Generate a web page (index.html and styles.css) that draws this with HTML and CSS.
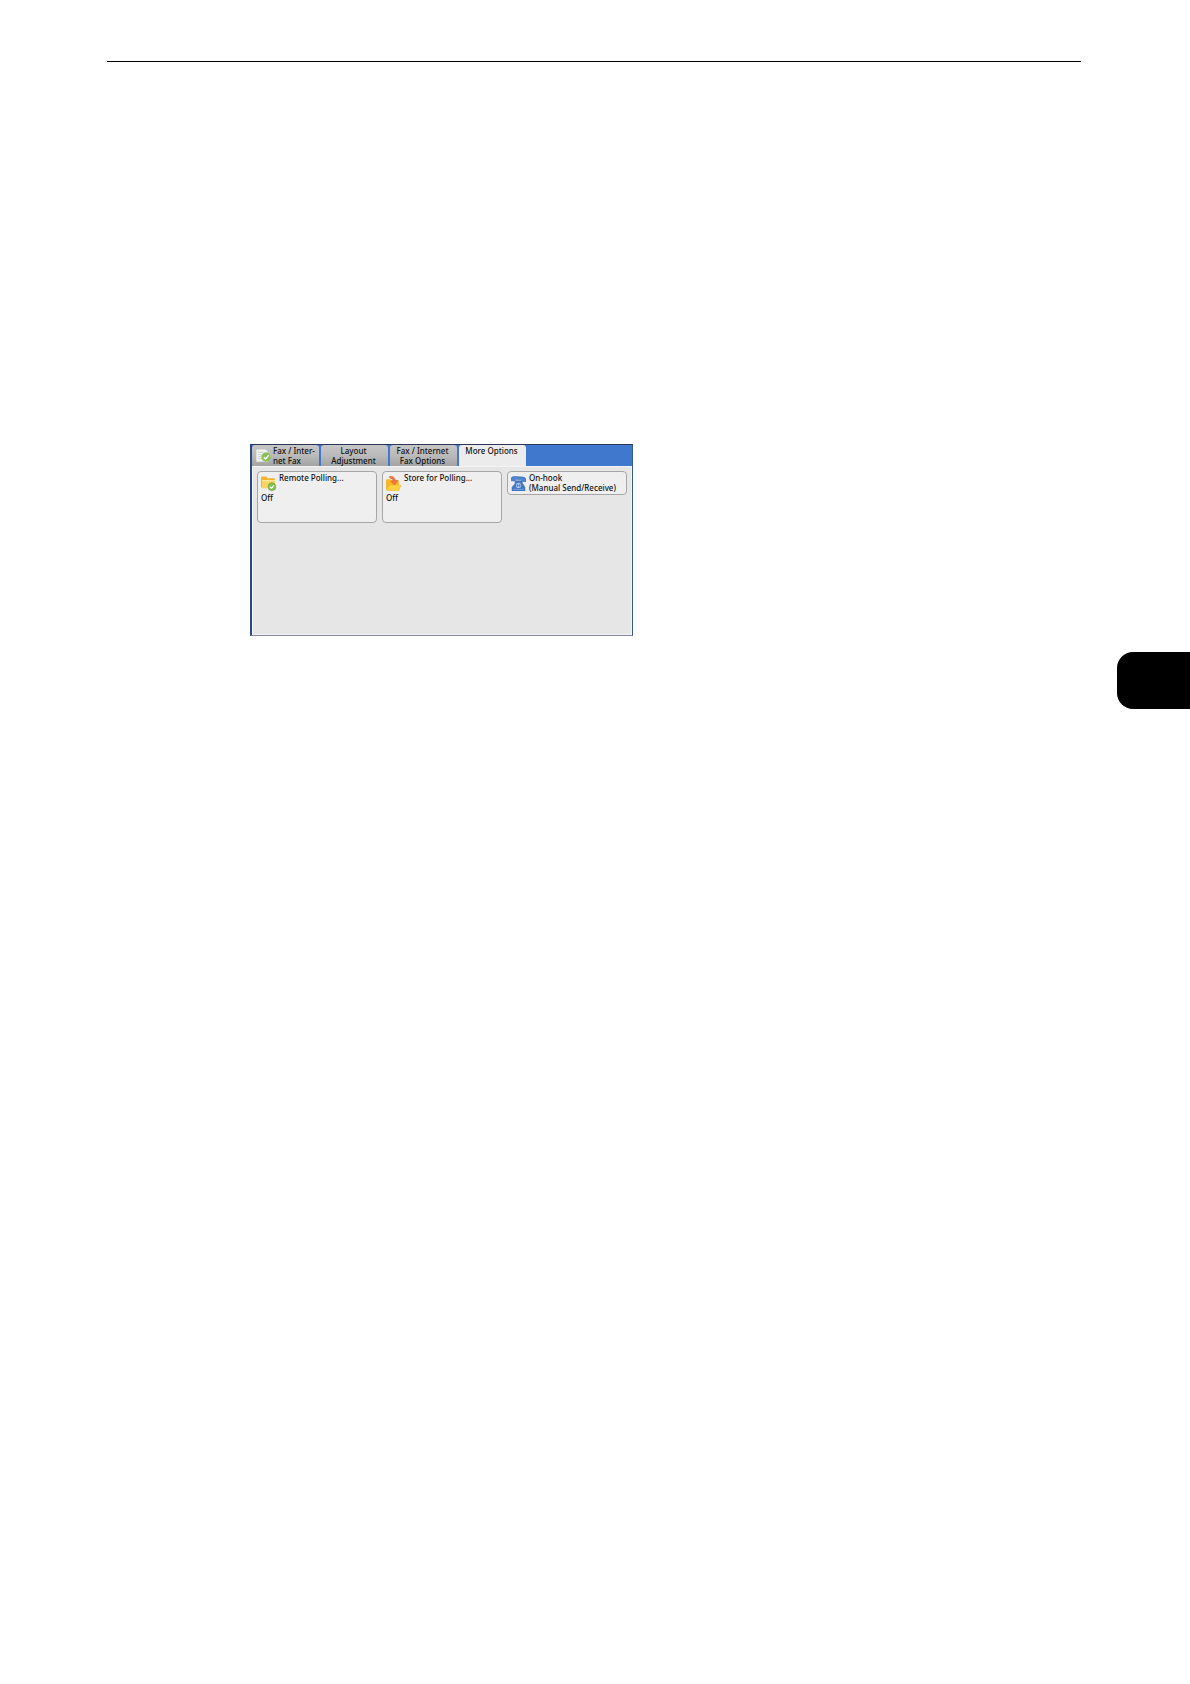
FILE: index.html
```html
<!DOCTYPE html>
<html lang="en">
<head>
<meta charset="utf-8">
<title>Fax / Internet Fax - More Options</title>
<link rel="stylesheet" href="styles.css">
</head>
<body>
<hr class="page-rule">
<main class="content">
  <section class="screen">
    <div class="tabs" role="tablist">
      <button class="tab tab-with-icon" role="tab" aria-selected="false">
        <svg class="icon" viewBox="0 0 14 14" aria-hidden="true">
          <path d="M0 1h9l2 2v10H0z" fill="#f1f3ef" stroke="#b4bab4" stroke-width=".6"/>
          <path d="M2 4h5M2 6h3M2 8h3M2 10h4" stroke="#b9c8bd" stroke-width=".7"/>
          <circle cx="9.500" cy="8.500" r="4.400" fill="#86bd55" stroke="#b5d49c" stroke-width=".6"/>
          <path d="M7.300 8.600l1.600 1.700 3-3.500" fill="none" stroke="#fff" stroke-width="1.300"/>
        </svg>
        <span>Fax / Inter-<br>net Fax</span>
      </button>
      <button class="tab" role="tab" aria-selected="false">Layout<br>Adjustment</button>
      <button class="tab" role="tab" aria-selected="false">Fax / Internet<br>Fax Options</button>
      <button class="tab tab-active" role="tab" aria-selected="true">More Options</button>
    </div>
    <div class="panel" role="tabpanel">
      <button class="card card-tall">
        <span class="card-head">
          <svg class="icon" viewBox="0 0 14 14" aria-hidden="true">
            <path d="M0 1.500q0-1 1-1h4l1 1.500h6q1 0 1 1v8H1q-1 0-1-1z" fill="#f3b32e"/>
            <path d="M1 4h12v7.500H1z" fill="#ffd566"/>
            <path d="M1 4.200h12" stroke="#ffedb0" stroke-width=".8"/>
            <circle cx="10.200" cy="10" r="3.600" fill="#84c24a" stroke="#62a336" stroke-width=".6"/>
            <path d="M8.200 10l1.600 1.600 2.500-3" fill="none" stroke="#fff" stroke-width="1.100"/>
          </svg>
          <span>Remote Polling...</span>
        </span>
        <span class="card-value">Off</span>
      </button>
      <button class="card card-tall">
        <span class="card-head">
          <svg class="icon" viewBox="0 0 14 14" aria-hidden="true">
            <path d="M0 4q0-1 1-1h3l1 1h6q1 0 1 1v8H1q-1 0-1-1z" fill="#f7b82a"/>
            <path d="M3 8.500h11l-2 4.700q-.2.500-1 .5H.8z" fill="#ffd03f" stroke="#f2ae24" stroke-width=".4"/>
            <path d="M3.500.3q4.500-.3 5.200 4h2.300L7.700 8.300 4.500 4.700h2.200Q6.200 2 3.500 1.800z" fill="#ef7a42" stroke="#d65724" stroke-width=".5"/>
          </svg>
          <span>Store for Polling...</span>
        </span>
        <span class="card-value">Off</span>
      </button>
      <button class="card">
        <span class="card-head">
          <svg class="icon" viewBox="0 0 14 14" aria-hidden="true">
            <path d="M4 4.500h6l.8 2.500 2.200 3.500V14H1v-3.500L3.800 7z" fill="#4479c6" stroke="#2f62ae" stroke-width=".5"/>
            <path d="M0 3Q0 .6 3 .4l8 .6q3 .4 3 2.700v1.600l-3.800-.3-.3-1.500-5.800-.4-.3 1.600L.2 4.500z" fill="#4f86d2" stroke="#2f62ae" stroke-width=".5"/>
            <circle cx="7" cy="8.800" r="2.400" fill="#a9c7ef"/>
            <path d="M6 7.300v3M8 7.300v3M5 8.800h4" stroke="#4479c6" stroke-width=".6"/>
            <path d="M2 12.500h10" stroke="#8fb4e6" stroke-width=".6"/>
          </svg>
          <span>On-hook<br>(Manual Send/Receive)</span>
        </span>
      </button>
    </div>
  </section>
</main>
<aside class="chapter-tab"></aside>
</body>
</html>
```
FILE: styles.css
```css
* {
  box-sizing: border-box;
}

body {
  margin: 0;
  background: #fff;
  color: #111;
  font-family: "Noto Sans", "Open Sans", sans-serif;
  font-size: 8px;
  line-height: 10px;
}

.page-rule {
  height: 1px;
  margin: 61px 109px 0 107px;
  border: 0;
  background: #000;
}

.content {
  padding: 382px 109px 0 250px;
}

.screen {
  display: flex;
  flex-direction: column;
  max-width: 383px;
  min-height: 192px;
  border: 1px solid #35598f;
  border-left: 2px solid #2c4a80;
  border-top-color: #2b3558;
  border-bottom-color: #85859a;
  background: #4078cd;
}

button {
  margin: 0;
  border: 0;
  color: inherit;
  font: inherit;
  font-weight: 500;
}

.tabs {
  display: grid;
  grid-template-columns: repeat(4, 67px);
  gap: 2px;
}

.tab {
  display: flex;
  align-items: flex-start;
  justify-content: center;
  height: 21px;
  padding: 1px 2px 0 0;
  border-radius: 3px 3px 0 0;
  background: linear-gradient(#c6c6c6, #bababa 50%, #a3a3a3);
  text-align: center;
  white-space: nowrap;
}

.tab-with-icon {
  justify-content: flex-start;
  gap: 2px;
  padding-left: 4px;
  text-align: left;
}

.tab-active {
  background: #ececec;
}

.icon {
  flex: none;
  width: 15px;
  height: 15px;
}

.tab .icon {
  margin-top: 2px;
}

.panel {
  display: grid;
  flex: 1;
  grid-template-columns: repeat(3, 1fr);
  align-items: start;
  gap: 5px;
  padding: 4px;
  border: 1px solid #f2f4f5;
  background: #e6e6e6;
}

.card {
  display: flex;
  flex-direction: column;
  gap: 2px;
  min-height: 24px;
  padding: 1px 0 1px 3px;
  border: 1px solid #a6a6a6;
  border-radius: 4px;
  background: #efefef;
  text-align: left;
  white-space: nowrap;
}

.card-tall {
  min-height: 52px;
}

.card-head {
  display: flex;
  gap: 3px;
}

.card .icon {
  margin-top: 3px;
}

.chapter-tab {
  width: 73px;
  height: 57px;
  margin: 16px 0 0 auto;
  border-radius: 16px 0 0 16px;
  background: #000;
}
```
